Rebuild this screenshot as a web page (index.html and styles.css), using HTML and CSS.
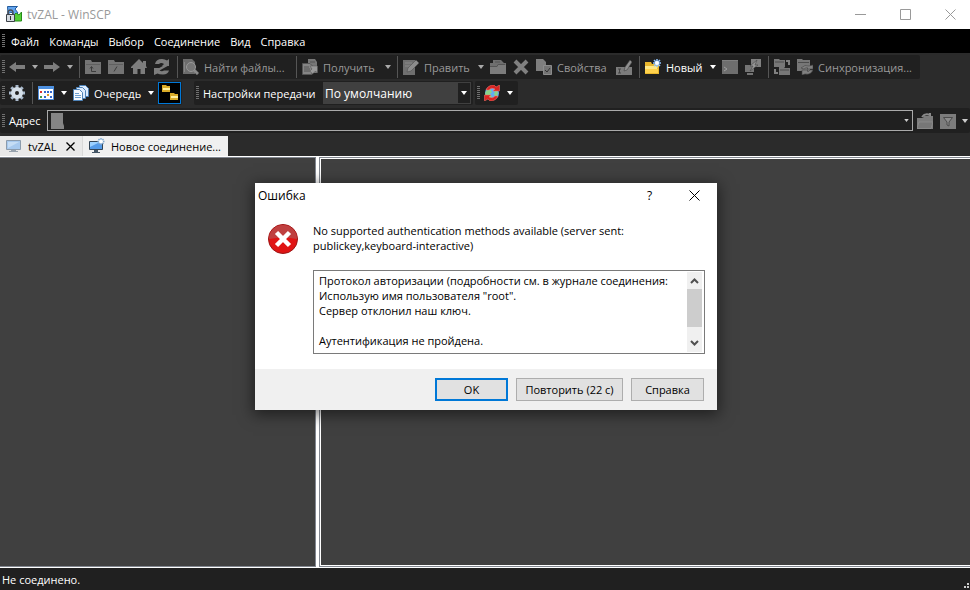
FILE: index.html
```html
<!DOCTYPE html>
<html lang="ru">
<head>
<meta charset="utf-8">
<title>tvZAL - WinSCP</title>
<link rel="stylesheet" href="styles.css">
</head>
<body>
<svg class="defs" aria-hidden="true">
  <symbol id="left" viewBox="0 0 16 16"><path fill="#7d7d7d" d="M0 8 7 3v3h9v4H7v3z"/></symbol>
  <symbol id="right" viewBox="0 0 16 16"><path fill="#7d7d7d" d="M16 8 9 3v3H0v4h9v3z"/></symbol>
  <symbol id="caret" viewBox="0 0 6 4"><path fill="currentColor" d="M0 0h6L3 4z"/></symbol>
  <symbol id="up" viewBox="0 0 16 16"><path fill="#747474" d="M0 1h6l1 2h9v12H0z"/><path fill="#606060" d="M1 5h14v1H1z"/><path stroke="#3c3c3c" fill="none" d="M5 9.500l1.500-2L8 9.500M6.500 8v4.500H11"/></symbol>
  <symbol id="root" viewBox="0 0 16 16"><path fill="#747474" d="M0 1h6l1 2h9v12H0z"/><path fill="#606060" d="M1 5h14v1H1z"/><path stroke="#3c3c3c" d="M9 7.500l-3 5"/></symbol>
  <symbol id="home" viewBox="0 0 16 16"><path fill="#7d7d7d" d="M8 0l4 4V2h3v5l1 2h-2v6H9.500v-5h-3v5H2V9H0V8z"/></symbol>
  <symbol id="reload" viewBox="0 0 16 16"><path fill="#7d7d7d" d="M1 5q1-5 7-5 3 0 5 1.500L15 0v7H8l2-2Q7 3 5 5zM0 9h7l-1.500 2.500Q8 13 10 11.500h5q-1 4-6 4-4 0-5.500-1L0 16z"/><path stroke="#7d7d7d" stroke-width="2.500" d="M13 6L4 11"/></symbol>
  <symbol id="find" viewBox="0 0 16 16"><path fill="#6c6c6c" d="M0 0h9l3 3v12H0z"/><path stroke="#858585" d="M1.500 3v10"/><circle cx="8" cy="8" r="4.500" fill="#777" stroke="#999"/><path stroke="#8a8a8a" stroke-width="3" d="M11 11l4 4"/></symbol>
  <symbol id="get" viewBox="0 0 16 16"><path fill="#777" d="M6 0h7l2 3v11H6z"/><path fill="#858585" stroke="#555" d="M.5 4.500H8l2 2v9H.5z"/><path stroke="#555" d="M2 8h5M2 10h6M2 12h6M8 3h5"/><path fill="#999" stroke="#555" stroke-width=".5" d="M8 7h7.500v7l-2-2-3 3-2.500-3 2-2z"/></symbol>
  <symbol id="edit" viewBox="0 0 16 16"><path fill="#6f6f6f" d="M0 1h12v15H0z"/><path stroke="#8a8a8a" d="M2 4h7M2 7h6"/><path fill="#8c8c8c" stroke="#484848" stroke-width=".5" d="M4 13l1-4 8-8 3 3-8 8z"/></symbol>
  <symbol id="open" viewBox="0 0 16 16"><path fill="#6f6f6f" d="M0 4h3V1h8l3 3h2v11H0z"/><path fill="#7c7c7c" d="M0 8h7l1-2h8v9H0z"/><path fill="none" stroke="#555" d="M5 3h5M0 7.500h7l1-2h7"/></symbol>
  <symbol id="delete" viewBox="0 0 16 16"><path stroke="#808080" stroke-width="4" d="M2 2l12 12M14 2L2 14"/></symbol>
  <symbol id="props" viewBox="0 0 16 16"><path fill="#7e7e7e" d="M0 0h7l3 3v9H0z"/><path fill="#747474" stroke="#8c8c8c" d="M7.500 6.500h8v9h-8z"/><path fill="none" stroke="#333" d="M9 11l2 2 3-4"/></symbol>
  <symbol id="rename" viewBox="0 0 16 16"><path fill="#7c7c7c" d="M0 8h16v8H0z"/><path fill="#909090" stroke="#444" stroke-width=".6" d="M8 12l1-4 5-7 2 2-5 8z"/><path stroke="#444" d="M2 10h3M2 14h3M3.500 10v4"/></symbol>
  <symbol id="new" viewBox="0 0 16 16"><path fill="#e9b72d" d="M0 3h6l1 2h7v10H0z"/><path fill="#ffe987" d="M0 7h13l-1 3H0z"/><path fill="#ffd24c" d="M0 10h13v4H0z"/><path stroke="#8fc3ff" stroke-width="1.500" d="M12 0v8M8 4h8M9 1l6 6M15 1L9 7"/><circle cx="12" cy="4" r="2" fill="#fff"/></symbol>
  <symbol id="console" viewBox="0 0 16 16"><path fill="#6e6e6e" d="M0 1h16v14H0z"/><path fill="#808080" d="M0 1h16v1H0z"/><path fill="none" stroke="#a0a0a0" d="M2 8l3 2-3 2"/></symbol>
  <symbol id="putty" viewBox="0 0 16 16"><path fill="#808080" d="M6 0h10v8H6z"/><path fill="#747474" d="M0 6h9v7H0zM2 14h6v2H2z"/><path fill="#969696" stroke="#444" stroke-width=".6" d="M12 1L5 7h3l-3 5 8-6H10z"/></symbol>
  <symbol id="sync" viewBox="0 0 16 16"><path fill="#777" d="M0 0h5l1 1h5v7H0zM5 8h5l1 1h5v7H5z"/><path stroke="#4c4c4c" d="M1 3h9M6 11h9"/><path fill="none" stroke="#808080" stroke-width="2" d="M12 2h3v4M4 14H1v-4"/></symbol>
  <symbol id="sync2" viewBox="0 0 16 16"><path fill="#777" d="M0 0h5l1 1h7v11H0z"/><path stroke="#4c4c4c" d="M1 3.500h11"/><path fill="#808080" stroke="#444" stroke-width=".6" d="M4 9q4-4 8-2l4-1v4h-6l1-1q-2-1-4 1zM5 11h6l-1 1q2 1 3-1h3q-2 5-8 4l-3 1z"/></symbol>
  <symbol id="gear" viewBox="0 0 16 16"><path stroke="#a9b9cb" stroke-width="3" d="M8 0v16M0 8h16M2.300 2.300l11.400 11.400M13.700 2.300L2.300 13.700"/><circle cx="8" cy="8" r="4" fill="#202020" stroke="#d5dfe9" stroke-width="4"/></symbol>
  <symbol id="table" viewBox="0 0 16 16"><path fill="#fff" stroke="#4e8bd8" d="M.5 1.500h15v13H.5z"/><path fill="#4d90e0" d="M0 1h16v3H0z"/><path fill="#d33" d="M2 6h2v2H2z"/><path fill="#494" d="M2 11h2v2H2z"/><path fill="#e09a2a" d="M9 9h2v2H9z"/><path fill="#36c" d="M6 6h2v2H6zM9 6h2v2H9zM6 11h2v2H6zM12 6h2v2h-2zM12 11h2v2h-2z"/></symbol>
  <symbol id="queue" viewBox="0 0 16 16"><path fill="#dcecff" stroke="#4e83b8" d="M6.500.500h6l3 3v8h-9z"/><path fill="#dcecff" stroke="#4e83b8" d="M3.500 2.500h6l3 3v8h-9z"/><path fill="#f5faff" stroke="#4e83b8" d="M.5 4.500h6l3 3v8H.5z"/><path stroke="#6d9fd0" d="M2 8.500h4M2 10.500h6M2 12.500h6"/></symbol>
  <symbol id="folders" viewBox="0 0 16 16"><path fill="#d9ab28" d="M0 0h4l1 1h3v6H0zM8 8h4l1 1h3v6H8z"/><path fill="#ffef9c" d="M1 3h7v2H1zM9 11h7v2H9z"/></symbol>
  <symbol id="globe" viewBox="0 0 16 16"><circle cx="8" cy="8" r="7" fill="#63adf0"/><path fill="#88d48a" d="M2 6l4-2 2 3-2 2 2 3-3 2-4-5zM11 5l3 2-1 5-3-2z"/><path fill="#d82422" stroke="#ff776d" stroke-width=".5" d="M2 5q2-5 8-5l2 2 3.500-2v6H9l2-2Q7 2 5 5zM14 11q-2 5-8 5l-2-2-3.500 2v-6H7l-2 2q4 2 6-1z"/></symbol>
  <symbol id="pc" viewBox="0 0 16 16"><path fill="#a7c9ee" stroke="#8b9bac" d="M.5 2.500h14v9H.5z"/><path fill="#c5ddf5" d="M2 4h11L2 10z"/><path fill="#98a3ae" d="M5 12h5v1h2v1H3v-1h2z"/></symbol>
  <symbol id="newpc" viewBox="0 0 16 16"><path fill="#559be8" stroke="#345" d="M.5 3.500h13v8H.5z"/><path fill="#9bd0ff" d="M1 4h10L1 9z"/><path fill="#456" d="M5 12h4v2h2v1H3v-1h2z"/><path stroke="#83a9cf" stroke-width="1.500" d="M12 0v7M8.500 3.500h7M9.500 1l5 5M14.500 1l-5 5"/><circle cx="12" cy="3.500" r="2" fill="#fff"/></symbol>
  <symbol id="opendir" viewBox="0 0 16 16"><path fill="#7c7c7c" d="M0 5h6l1-2h9v13H0z"/><path fill="#777" stroke="#999" stroke-width=".5" d="M2 9h14l-2 6.500H0z"/><path fill="none" stroke="#8a8a8a" stroke-width="2" d="M5 4q3-4 8-2V0"/></symbol>
  <symbol id="filter" viewBox="0 0 16 16"><path fill="#7c7c7c" d="M0 1h16v15H0z"/><path fill="#8c8c8c" stroke="#4c4c4c" d="M3.500 4.500h9L9 9v4l-2-1V9z"/></symbol>
  <symbol id="x" viewBox="0 0 11 11"><path stroke="currentColor" fill="none" d="M.5.500l10 10M10.500.500l-10 10"/></symbol>
  <symbol id="tabx" viewBox="0 0 9 9"><path stroke="currentColor" stroke-width="1.300" fill="none" d="M.5.500l8 8M8.500.500l-8 8"/></symbol>
</svg>

<div class="window">
  <header class="titlebar">
    <svg class="applogo" viewBox="0 0 17 17" aria-hidden="true"><path fill="#63a5ef" stroke="#235a9b" d="M1.500.500h10L9 3l3 4-3 3-4-4-3 2z"/><path fill="#54cf35" stroke="#258b18" d="M15.500 6v9H7l2-2-2-3 3-3 3 2z"/><path fill="none" stroke="#4b5058" stroke-width="1.500" d="M2 9V7q0-3 2.500-3T7 7v2"/><path fill="#d5dae0" stroke="#3c4148" d="M.5 8.500h8v7h-8z"/><path fill="#333" d="M4 10h1v4H4z"/></svg>
    <h1>tvZAL - WinSCP</h1>
    <button class="winbtn" aria-label="Свернуть"><svg viewBox="0 0 11 11"><path stroke="currentColor" d="M0 5.500h11"/></svg></button>
    <button class="winbtn" aria-label="Развернуть"><svg viewBox="0 0 11 11"><path fill="none" stroke="currentColor" d="M.5.500h10v10H.5z"/></svg></button>
    <button class="winbtn" aria-label="Закрыть"><svg><use href="#x"/></svg></button>
  </header>

  <nav class="menu">
    <i class="grip"></i>
    <button>Файл</button><button>Команды</button><button>Выбор</button><button>Соединение</button><button>Вид</button><button>Справка</button>
  </nav>

  <div class="bars">
    <div class="row">
      <div class="bar">
        <i class="grip"></i>
        <button class="tool" aria-label="Назад" disabled><svg><use href="#left"/></svg></button>
        <button class="drop" aria-label="История назад" disabled><svg><use href="#caret"/></svg></button>
        <button class="tool" aria-label="Вперёд" disabled><svg><use href="#right"/></svg></button>
        <button class="drop" aria-label="История вперёд" disabled><svg><use href="#caret"/></svg></button>
        <i class="sep"></i>
        <button class="tool" aria-label="Вверх" disabled><svg><use href="#up"/></svg></button>
        <button class="tool" aria-label="Корень" disabled><svg><use href="#root"/></svg></button>
        <button class="tool" aria-label="Домой" disabled><svg><use href="#home"/></svg></button>
        <button class="tool" aria-label="Обновить" disabled><svg><use href="#reload"/></svg></button>
        <i class="sep"></i>
        <button class="tool find" disabled><svg><use href="#find"/></svg>Найти файлы...</button>
        <i class="sep"></i>
        <button class="tool get" disabled><svg><use href="#get"/></svg>Получить</button>
        <button class="drop" aria-label="Варианты получения" disabled><svg><use href="#caret"/></svg></button>
        <i class="sep"></i>
        <button class="tool edit" disabled><svg><use href="#edit"/></svg>Править</button>
        <button class="drop" aria-label="Варианты правки" disabled><svg><use href="#caret"/></svg></button>
        <button class="tool" aria-label="Открыть" disabled><svg><use href="#open"/></svg></button>
        <button class="tool" aria-label="Удалить" disabled><svg><use href="#delete"/></svg></button>
        <button class="tool props" disabled><svg><use href="#props"/></svg>Свойства</button>
        <button class="tool" aria-label="Переименовать" disabled><svg><use href="#rename"/></svg></button>
        <i class="sep"></i>
        <button class="tool new"><svg><use href="#new"/></svg>Новый</button>
        <button class="drop" aria-label="Что создать"><svg><use href="#caret"/></svg></button>
        <button class="tool" aria-label="Консоль" disabled><svg><use href="#console"/></svg></button>
        <button class="tool" aria-label="PuTTY" disabled><svg><use href="#putty"/></svg></button>
        <i class="sep"></i>
        <button class="tool" aria-label="Синхронный просмотр" disabled><svg><use href="#sync"/></svg></button>
        <button class="tool syncing" disabled><svg><use href="#sync2"/></svg>Синхронизация...</button>
      </div>
    </div>

    <div class="row second">
      <div class="bar">
        <i class="grip"></i>
        <button class="tool" aria-label="Настройки"><svg><use href="#gear"/></svg></button>
        <i class="sep"></i>
        <button class="tool" aria-label="Вид списка"><svg><use href="#table"/></svg></button>
        <button class="drop" aria-label="Варианты вида"><svg><use href="#caret"/></svg></button>
        <button class="tool queue"><svg><use href="#queue"/></svg>Очередь</button>
        <button class="drop" aria-label="Действия очереди"><svg><use href="#caret"/></svg></button>
        <button class="tool active" aria-label="Дерево папок" aria-pressed="true"><svg><use href="#folders"/></svg></button>
      </div>
      <div class="bar transfer">
        <i class="grip"></i>
        <label for="preset">Настройки передачи</label>
        <div class="combo">
          <select id="preset"><option>По умолчанию</option></select>
          <span class="arrow"><svg><use href="#caret"/></svg></span>
        </div>
      </div>
      <div class="bar globe">
        <i class="grip"></i>
        <button class="tool" aria-label="Поддерживать каталог"><svg><use href="#globe"/></svg></button>
        <button class="drop" aria-label="Варианты"><svg><use href="#caret"/></svg></button>
      </div>
    </div>

    <div class="bar address">
      <i class="grip"></i>
      <label for="path">Адрес</label>
      <div class="path">
        <svg class="disk" viewBox="0 0 13 16" aria-hidden="true"><path fill="#858585" d="M0 0h12v10l1 3v3H0z"/></svg>
        <input id="path" type="text">
        <svg class="mini"><use href="#caret"/></svg>
      </div>
      <button class="tool" aria-label="Открыть каталог" disabled><svg><use href="#opendir"/></svg></button>
      <button class="tool" aria-label="Фильтр" disabled><svg><use href="#filter"/></svg></button>
      <button class="drop more" aria-label="Ещё"><svg><use href="#caret"/></svg></button>
    </div>

    <div class="tabs">
      <button class="tab current"><svg class="ticon"><use href="#pc"/></svg>tvZAL<svg class="tclose"><use href="#tabx"/></svg></button>
      <button class="tab"><svg class="ticon"><use href="#newpc"/></svg>Новое соединение...</button>
    </div>
  </div>

  <main class="panels">
    <section class="panel tree"></section>
    <section class="panel files"></section>
  </main>

  <footer class="status"><span>Не соединено.</span>
    <svg viewBox="0 0 6 6" aria-hidden="true"><path fill="#ccc" d="M3 0h2v2H3zM3 3h2v2H3zM0 3h2v2H0z"/></svg>
  </footer>

  <div class="overlay">
    <div class="dialog" role="dialog" aria-labelledby="dlg">
      <div class="dtitle">
        <h2 id="dlg">Ошибка</h2>
        <button class="winbtn help" aria-label="Подсказка">?</button>
        <button class="winbtn" aria-label="Закрыть окно"><svg><use href="#x"/></svg></button>
      </div>
      <div class="dbody">
        <svg class="erricon" viewBox="0 0 32 32" aria-hidden="true"><circle cx="16" cy="16" r="14.500" fill="#e01414" stroke="#9c1515"/><path fill="#bf4040" d="M2 16a14 14 0 0 1 28 0q-13-3-28 0z"/><path stroke="#fff" stroke-width="4.500" d="M9.500 9.500l13 13M22.500 9.500l-13 13"/></svg>
        <div class="message">
          <p>No supported authentication methods available (server sent: publickey,keyboard-interactive)</p>
          <div class="log">
            <textarea readonly aria-label="Протокол авторизации">Протокол авторизации (подробности см. в журнале соединения:
Использую имя пользователя "root".
Сервер отклонил наш ключ.

Аутентификация не пройдена.</textarea>
            <div class="scroll">
              <svg viewBox="0 0 9 6"><path fill="none" stroke="#505050" stroke-width="2" d="M1 5l3.500-3.500L8 5"/></svg>
              <i class="thumb"></i>
              <svg viewBox="0 0 9 6"><path fill="none" stroke="#505050" stroke-width="2" d="M1 1l3.500 3.500L8 1"/></svg>
            </div>
          </div>
        </div>
      </div>
      <div class="dfoot">
        <button class="btn primary">OK</button>
        <button class="btn retry">Повторить (22 с)</button>
        <button class="btn">Справка</button>
      </div>
    </div>
  </div>
</div>
</body>
</html>
```
FILE: styles.css
```css
* { box-sizing: border-box; }
body {
  margin: 0;
  font-family: "Open Sans", "Noto Sans", sans-serif;
  font-size: 11px;
  line-height: 15px;
  background: #2b2b2b;
}
button, input, select, textarea { font: inherit; color: inherit; }
button { border: 0; padding: 0; background: none; white-space: nowrap; }
h1, h2, p { margin: 0; font-size: inherit; font-weight: 400; }
svg { display: block; flex: none; }
.defs { position: absolute; width: 0; height: 0; }

.window {
  position: relative;
  display: flex;
  flex-direction: column;
  min-height: 100vh;
}

.titlebar {
  display: flex;
  align-items: center;
  height: 29px;
  padding-left: 6px;
  background: #fff;
  color: #999;
  font-size: 12px;
}
.applogo { width: 17px; height: 17px; margin-right: 4px; }
.titlebar h1 { flex: 1; }
.winbtn { display: grid; place-items: center; width: 45px; height: 27px; }
.titlebar .winbtn { padding-left: 6px; }
.winbtn svg { width: 11px; height: 11px; }

.menu {
  display: flex;
  align-items: center;
  height: 24px;
  background: #000;
  color: #fff;
}
.menu button { padding: 0 5px; }
.grip {
  flex: none;
  width: 3px;
  height: 14px;
  margin: 0 1px 0 2px;
  background: repeating-linear-gradient(#707070 0 1px, transparent 1px 2px);
}

.bars { padding-top: 2px; background: #2b2b2b; color: #fff; }
.row { display: flex; }
.second { margin-top: 2px; }
.bar {
  display: flex;
  align-items: center;
  height: 24px;
  border-radius: 2px;
  background: #202020;
}
.tool {
  display: flex;
  align-items: center;
  flex: none;
  gap: 5px;
  width: 23px;
  height: 24px;
  padding-left: 3px;
}
.tool svg { width: 16px; height: 16px; }
.tool:disabled { color: #999; }
.find { width: 113px; }
.get { width: 83px; }
.edit { width: 75px; }
.props { width: 80px; }
.new { width: 65px; }
.syncing { width: 126px; }
.queue { width: 75px; }
.drop { display: grid; place-items: center; flex: none; width: 12px; height: 24px; }
.drop svg, .arrow svg { width: 6px; height: 4px; }
.drop:disabled { color: #aaa; }
.sep { flex: none; width: 6px; height: 22px; background: linear-gradient(#555, #555) 3px 0 / 1px 100% no-repeat; }
.active { width: 23px; height: 22px; margin: 0 1px; border: 1px solid #0078d7; background: #000; }
.transfer { margin-left: 12px; padding-right: 2px; }
.transfer label { width: 123px; padding-left: 3px; white-space: nowrap; }
.combo { display: flex; width: 148px; height: 22px; border: 1px solid #404040; background: #404040; font-size: 12px; }
.combo select { flex: 1; min-width: 0; appearance: none; border: 0; padding: 0 1px; background: transparent; }
.arrow { display: grid; place-items: center; width: 12px; background: #202020; }
.globe { margin-left: 2px; padding-right: 2px; }

.address { margin-top: 3px; height: 25px; }
.address label { width: 41px; padding-left: 3px; }
.path {
  display: flex;
  align-items: center;
  flex: 1;
  height: 21px;
  margin-right: 1px;
  padding: 0 3px;
  border: 1px solid #aaa;
}
.path input { flex: 1; min-width: 0; border: 0; background: none; }
.disk { width: 13px; height: 16px; }
.mini { width: 5px; height: 3px; color: #ccc; }
.more { width: 10px; color: #ccc; }

.tabs { display: flex; padding-top: 3px; color: #000; }
.tab {
  display: flex;
  align-items: center;
  height: 20px;
  padding: 0 7px 0 6px;
  background: #f0f0f0;
}
.ticon { width: 16px; height: 16px; margin-right: 6px; }
.tclose { width: 9px; height: 9px; margin-left: auto; }
.current { width: 83px; border-right: 1px solid #d9d9d9; background: #e9e9e9; }

.panels {
  display: grid;
  grid-template-columns: 316px 1fr;
  gap: 3px;
  flex: 1;
  padding: 1px 0;
  background: #fff;
}
.panel { border: 1px solid #828790; border-left: 0; background: #404040; }
.files { border-left: 1px solid #828790; border-right: 0; box-shadow: inset 1px 1px #fff, inset 0 -1px #fff; }

.status {
  display: flex;
  justify-content: space-between;
  align-items: center;
  height: 22px;
  padding-left: 2px;
  background: #202020;
  color: #fff;
}
.status svg { align-self: flex-end; width: 6px; height: 6px; margin-bottom: 1px; }

.overlay {
  position: absolute;
  inset: 0;
  display: grid;
  place-items: center;
  padding: 3px 0 0 2px;
}
.dialog { width: 462px; background: #fff; box-shadow: 0 3px 14px 2px rgba(0, 0, 0, .5); }
.dtitle { display: flex; align-items: center; height: 24px; padding-left: 3px; font-size: 12px; }
.dtitle h2 { flex: 1; }
.dbody { display: flex; gap: 14px; padding: 16px 12px 15px; }
.erricon { width: 32px; height: 32px; }
.message { flex: 1; min-width: 0; }
.message p { height: 30px; }
.log { display: flex; height: 84px; margin-top: 17px; padding: 1px 2px 1px 1px; border: 1px solid #7a7a7a; }
.log textarea {
  flex: 1;
  min-width: 0;
  border: 0;
  padding: 1px 0 0 4px;
  background: none;
  white-space: pre;
  overflow: hidden;
  resize: none;
}
.scroll {
  display: flex;
  flex-direction: column;
  align-items: center;
  width: 15px;
  padding: 6px 0;
  background: #f0f0f0;
}
.scroll svg { width: 9px; height: 6px; }
.thumb { width: 15px; height: 38px; margin: 5px 0 auto; background: #cdcdcd; }
.dfoot { display: flex; justify-content: flex-end; gap: 8px; padding: 9px 13px; background: #f0f0f0; }
.btn { width: 73px; height: 23px; border: 1px solid #adadad; background: #e1e1e1; }
.primary { border: 2px solid #0078d7; }
.retry { width: 107px; }
```
